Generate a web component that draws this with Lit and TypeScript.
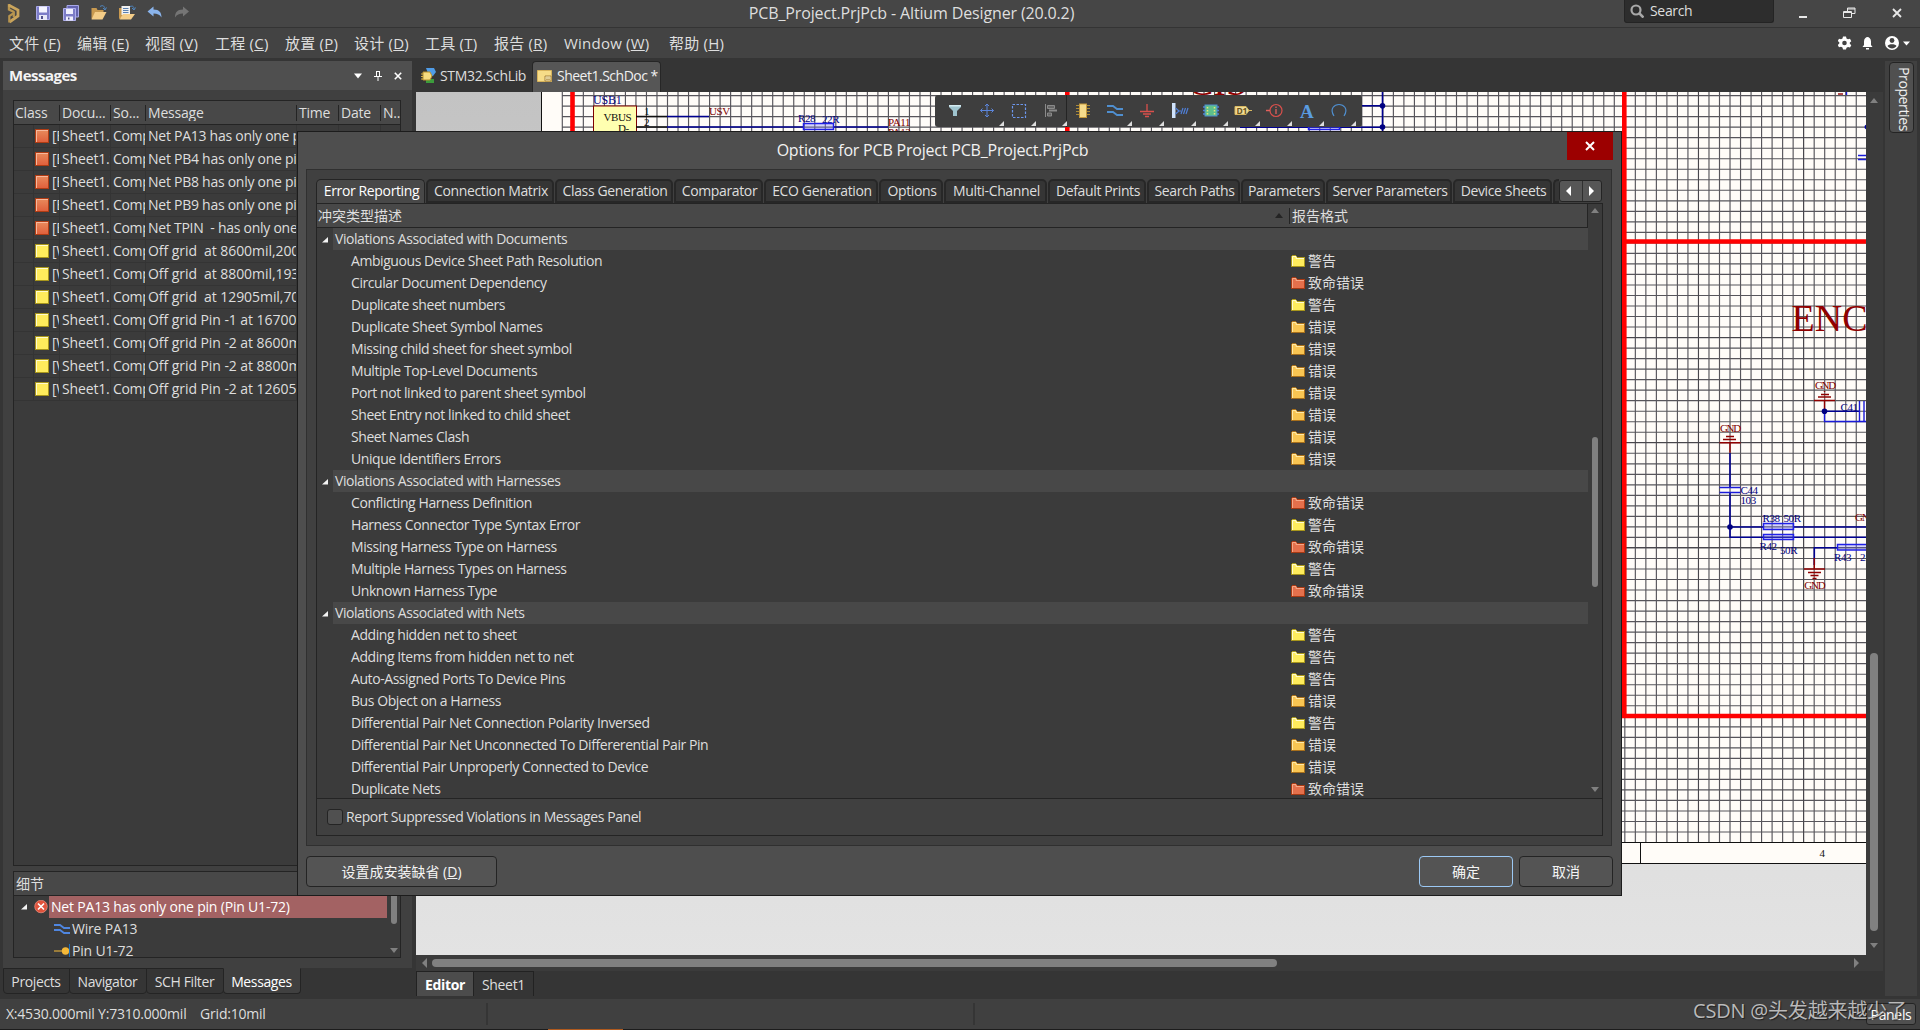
import { LitElement, html, svg, css, nothing } from "lit";
import { customElement } from "lit/decorators.js";

type Level = "warn" | "error" | "fatal";
interface Row { text: string; level?: Level }

const LEVEL_NAME: Record<Level, string> = { warn: "警告", error: "错误", fatal: "致命错误" };
const LEVEL_COLORS: Record<Level, [string, string, string]> = {
  warn: ["#ffec5c", "#fffbd0", "#a8961c"],
  error: ["#f9c552", "#ffe9a8", "#a8701c"],
  fatal: ["#e4704c", "#f5a888", "#a83a14"],
};

const g = (text: string): Row => ({ text });
const r = (text: string, level: Level): Row => ({ text, level });

const ROWS: Row[] = [
  g("Violations Associated with Documents"),
  r("Ambiguous Device Sheet Path Resolution", "warn"),
  r("Circular Document Dependency", "fatal"),
  r("Duplicate sheet numbers", "warn"),
  r("Duplicate Sheet Symbol Names", "error"),
  r("Missing child sheet for sheet symbol", "error"),
  r("Multiple Top-Level Documents", "error"),
  r("Port not linked to parent sheet symbol", "error"),
  r("Sheet Entry not linked to child sheet", "error"),
  r("Sheet Names Clash", "error"),
  r("Unique Identifiers Errors", "error"),
  g("Violations Associated with Harnesses"),
  r("Conflicting Harness Definition", "fatal"),
  r("Harness Connector Type Syntax Error", "warn"),
  r("Missing Harness Type on Harness", "fatal"),
  r("Multiple Harness Types on Harness", "warn"),
  r("Unknown Harness Type", "fatal"),
  g("Violations Associated with Nets"),
  r("Adding hidden net to sheet", "warn"),
  r("Adding Items from hidden net to net", "warn"),
  r("Auto-Assigned Ports To Device Pins", "warn"),
  r("Bus Object on a Harness", "error"),
  r("Differential Pair Net Connection Polarity Inversed", "warn"),
  r("Differential Pair Net Unconnected To Differerential Pair Pin", "error"),
  r("Differential Pair Unproperly Connected to Device", "error"),
  r("Duplicate Nets", "fatal"),
];

const TABS: [string, number][] = [
  ["Error Reporting", 110], ["Connection Matrix", 129], ["Class Generation", 119],
  ["Comparator", 90], ["ECO Generation", 115], ["Options", 65], ["Multi-Channel", 104],
  ["Default Prints", 99], ["Search Paths", 94], ["Parameters", 85],
  ["Server Parameters", 127], ["Device Sheets", 100],
];

const MENU: [string, string, number][] = [
  ["文件", "F", 68], ["编辑", "E", 68], ["视图", "V", 70], ["工程", "C", 70], ["放置", "P", 69],
  ["设计", "D", 71], ["工具", "T", 69], ["报告", "R", 70], ["Window", "W", 105], ["帮助", "H", 60],
];

const MESSAGES: [boolean, string][] = [
  [true, "Net PA13 has only one pin"],
  [true, "Net PB4 has only one pin"],
  [true, "Net PB8 has only one pin"],
  [true, "Net PB9 has only one pin"],
  [true, "Net TPIN  - has only one pin"],
  [false, "Off grid  at 8600mil,2000mil"],
  [false, "Off grid  at 8800mil,1930mil"],
  [false, "Off grid  at 12905mil,7000mil"],
  [false, "Off grid Pin -1 at 16700mil"],
  [false, "Off grid Pin -2 at 8600mil"],
  [false, "Off grid Pin -2 at 8800mil"],
  [false, "Off grid Pin -2 at 12605mil"],
];

const folder = (level: Level) => {
  const [fill, light, dark] = LEVEL_COLORS[level];
  return html`<svg class="folder" width="14" height="13" viewBox="0 0 14 13">
    <path d="M0 12V1h1V0h4v1h1v1h8v10z" fill=${dark} />
    <path d="M1 11V1h4v1h1v1h7v8z" fill=${fill} />
    <path d="M1.5 11V1.500H5V3.500h8" fill="none" stroke=${light} />
  </svg>`;
};

const tri = (dir: "up" | "down" | "left" | "right", color = "#808080") => {
  const d = { up: "M0 6l4-5 4 5z", down: "M0 1h8L4 6z", left: "M6 0v10L1 5z", right: "M1 0v10l5-5z" }[dir];
  return html`<svg class="tri" width="8" height=${dir === "up" || dir === "down" ? 7 : 10}><path d=${d} fill=${color} /></svg>`;
};

const cross = (s: number, w: number, color = "#fff") =>
  html`<svg width=${s} height=${s} viewBox="0 0 10 10"><path d="M1 1l8 8M9 1L1 9" stroke=${color} stroke-width=${w} /></svg>`;

const expander = html`<svg class="expander" width="6" height="6"><path d="M6 0v5.500H0z" fill="#f4f4f4" /></svg>`;

const TOOL_ICONS = [
  svg`<path d="M4 5h12v2l-4 4v5H8v-5L4 7z" fill="#9fc4cf"/><path d="M4 5h12v1.500H4z" fill="#d5ecf2"/>`,
  svg`<path d="M10 4v13M3.500 10.500h13M8 6l2-2 2 2M8 15l2 2 2-2M5.500 8.500l-2 2 2 2M14.500 8.500l2 2-2 2" stroke="#5c86dc" fill="none"/>`,
  svg`<rect x="3.500" y="4.500" width="13" height="13" fill="none" stroke="#6c96ec" stroke-width="1.200" stroke-dasharray="2.500 1.500"/>`,
  svg`<path d="M4.500 4v13" stroke="#8a8a8a"/><path d="M6.500 5.500h7v3h-7zM6.500 13h4v3h-4z" fill="#666" stroke="#8a8a8a"/><path d="M8 9.500h8v2H8z" fill="#8a8a8a"/>`,
  svg`<path d="M3 5.500h14M3 8.500h14M3 11.500h14M3 14.500h14" stroke="#a8893a"/><rect x="6.500" y="4" width="7" height="13.500" fill="#f6dc8c" stroke="#c89b3c"/>`,
  svg`<path d="M2 6h6l4 3h6M2 12h6l4 3h6" stroke="#4f8fd0" stroke-width="1.800" fill="none"/>`,
  svg`<path d="M10 4v7M3 11.500h14M6 14h8M8 16.500h4" stroke="#d9504c" stroke-width="1.300" fill="none"/>`,
  svg`<rect x="3" y="3" width="3.500" height="15" fill="#cfe2fb"/><path d="M6.500 8l3.500 3-3.500 3M10 11h2M12 14l2-6M14.500 14l2-6M17 14l2-6" stroke="#4f7fd8" stroke-width="1.200" fill="none"/>`,
  svg`<path d="M2 7h16M2 10.500h16M2 14h16" stroke="#4f7fd8" stroke-width="1.500"/><rect x="4" y="5" width="12" height="11" fill="#5fc08a" stroke="#4f8fd0"/><path d="M6.500 7v8M13.500 7v8" stroke="#e9e47a" stroke-dasharray="1.500 1.500" stroke-width="1.500"/>`,
  svg`<path d="M2 6.500h11l3 4-3 4H2z" fill="#f0dc98" stroke="#d8b860"/><path d="M15 10.500h4" stroke="#d8b860"/><text x="3.500" y="14" font-size="8.500" font-weight="700" fill="#6a5420">D1</text>`,
  svg`<circle cx="11" cy="10.500" r="6" fill="none" stroke="#d9504c" stroke-width="1.200"/><path d="M1 10.500h4M11 9v5M11 6.500v1.500" stroke="#e0605c" stroke-width="1.300"/>`,
  svg`<text x="3" y="17.500" font-size="19" font-weight="700" style="font-family:'Liberation Serif',serif" fill="#5a9ce0">A</text>`,
  svg`<path d="M5 16C0 8 6 4.500 10 4.500S20 8 15 16" fill="none" stroke="#4f8fd0" stroke-width="1.200"/>`,
];

const STEP = 10.52;

@customElement("schematic-canvas")
class SchematicCanvas extends LitElement {
  static styles = css`
    :host { display: block; width: 1450px; height: 863px; overflow: hidden; letter-spacing: 0; }
    svg { display: block; }
    text { font-family: "Liberation Serif", serif; font-size: 12px; letter-spacing: -0.2px; }
    .n { fill: #000080; }
    .m { fill: #800000; }
    .k { fill: #111; }
    .s { font-size: 11px; letter-spacing: -0.4px; }
    .gn { font-size: 11px; letter-spacing: -1.2px; }
    .mid { text-anchor: middle; }
    .huge { font-size: 38px; fill: #900000; letter-spacing: 0; }
    .wire { stroke: #000090; stroke-width: 1.6; fill: none; }
    .thin { stroke: #1a1ad8; stroke-width: 1.4; fill: none; }
    .gnd { stroke: #900000; stroke-width: 1.4; fill: none; }
    .pin { stroke: #111; stroke-width: 1.4; fill: none; }
    .res { stroke: #2020e8; stroke-width: 1.5; fill: rgba(120, 120, 255, 0.3); }
    .red { stroke: #ff0000; stroke-width: 4.6; fill: none; }
  `;

  private grid() {
    let d = "";
    for (let x = 562.3; x < 1866; x += STEP) d += `M${x.toFixed(2)} 92V842.500`;
    for (let y = 95.6; y < 842; y += STEP) d += `M562 ${y.toFixed(2)}H1866`;
    return d;
  }

  render() {
    return html`<svg width="1450" height="863" viewBox="416 92 1450 863">
      <defs><linearGradient id="bg" x1="0" y1="0" x2="0" y2="1">
        <stop offset="0" stop-color="#c3c3c3" /><stop offset="1" stop-color="#e3e3e3" />
      </linearGradient></defs>
      <rect x="416" y="92" width="1450" height="863" fill="url(#bg)" />
      <rect x="541" y="92" width="1325" height="771" fill="#fffcf8" />
      <path d=${this.grid()} stroke="#57555b" stroke-width="1.150" fill="none" />
      <path d="M1698.500 92V842M1803.500 92V842M1626 337.500H1866M1626 442.500H1866M1626 547.500H1866" stroke="#48464c" />
      <path d="M541.500 92V863.500H1866M562 842.500H1866M1640.500 842V863" stroke="#111" fill="none" />
      <text class="k mid s" x="1822" y="857">4</text>

      <text class="n" x="593" y="104">USB1</text>
      <rect x="593.500" y="106" width="43" height="40" fill="#ffffb0" stroke="#800000" />
      <text class="k s" x="603.500" y="121">VBUS</text>
      <text class="k s" x="618" y="132">D-</text>
      <path class="pin" d="M636 116.500h31M636 127h31" />
      <text class="k s" x="644" y="115">1</text><text class="k s" x="644" y="126">2</text>
      <path class="wire" d="M667 116.500H709M667 127H803M834 127H888" />
      <text class="m s" x="709" y="115">USV</text>
      <text class="n s" x="798" y="122">R28</text><text class="n s" x="822" y="122.500">22R</text>
      <rect class="res" x="803.500" y="123.500" width="30" height="6" />
      <text class="m s" x="888" y="126">PA11</text>
      <text class="m s" x="888" y="136">PA12</text>
      <text class="huge" x="1188" y="95">CIS</text>
      <path class="wire" d="M1382.500 92V131M1362 105.800h20M1240 127.200h142" />
      <circle cx="1382.500" cy="105.800" r="2.800" fill="#000080" /><circle cx="1382.500" cy="127" r="2.800" fill="#000080" />
      <rect class="res" x="1308.500" y="123.500" width="31" height="6" />
      <path class="red" d="M572.500 92V140M1067.300 92V140M1624.300 92V718M1622 241.500H1866M1622 716H1866" />
      <path class="gnd" d="M1838 94h5" /><path class="thin" d="M1846.500 92v3M1858 155.500h8M1858 159.500h8" />
      <circle cx="1867" cy="127" r="2.500" fill="#0000a0" />

      <text class="huge" x="1791.500" y="330.500">ENC</text>
      <text class="m mid gn" x="1825" y="388.500">GND</text>
      <path class="gnd" d="M1824.500 391v1M1821 394.500h8M1818 397h13M1814 400.500h21M1824.500 400.500v10" />
      <path class="thin" d="M1824.500 411V421.500H1866" /><path class="wire" d="M1824.500 411.300H1859" />
      <circle cx="1824.500" cy="411.300" r="2.800" fill="#000080" />
      <text class="n s" x="1840.500" y="410.500">C41</text>
      <path class="thin" d="M1859.500 401v20M1864 401v20" />

      <text class="m mid gn" x="1730" y="431.500">GND</text>
      <path class="gnd" d="M1726 436.500h8M1723 439.500h13M1719.500 442.800h21M1730 442.800v10" />
      <path class="wire" d="M1730 453V487M1730 492V537.300H1866M1730 527h33M1794 527H1866" />
      <path class="thin" d="M1719.500 487.500h21M1719.500 492.500h21" />
      <circle cx="1730" cy="527" r="2.800" fill="#000080" />
      <text class="n s" x="1740.500" y="493.500">C44</text><text class="n s" x="1740.500" y="503.500">103</text>
      <rect class="res" x="1763.500" y="523.500" width="30" height="6" />
      <rect class="res" x="1763.500" y="534.500" width="30" height="5" />
      <text class="n s" x="1762.500" y="521.500">R38</text><text class="n s" x="1783.500" y="521.500">50R</text>
      <text class="n s" x="1759.500" y="549.500">R42</text><text class="n s" x="1780" y="553.500">50R</text>
      <text class="m gn" x="1855" y="520.500">GND</text>
      <path class="wire" d="M1814.300 565V547.800H1837" />
      <rect class="res" x="1837.500" y="544.500" width="40" height="5.500" />
      <text class="n s" x="1834" y="560.500">R43</text><text class="n s" x="1860" y="560.500">2.2K</text>
      <path class="gnd" d="M1814.300 558v11M1804 569h21M1808 572.500h13M1810.500 575.500h8M1812.500 578.500h4" />
      <text class="m mid gn" x="1814.300" y="588.500">GND</text>
    </svg>`;
  }
}

@customElement("options-dialog")
class OptionsDialog extends LitElement {
  static styles = css`
    :host { display: flex; flex-direction: column; box-sizing: border-box; width: 1325px; height: 765px;
      background: #4e4e4e; border: 1px solid #1c1c1c; color: #dedede; letter-spacing: -0.43px; }
    .head { height: 37px; display: flex; flex: none; position: relative; justify-content: center; align-items: center; box-sizing: border-box;
      font-size: 16px; letter-spacing: -0.2px; color: #f2f2f2; padding: 0 54px 2px 0; }
    .close { position: absolute; right: 8px; top: 0; width: 46px; height: 28px; background: #9c0000;
      display: grid; place-items: center; }
    .frame { margin: 0 9px 0 8px; height: 677px; box-sizing: border-box; border: 1px solid #303030; background: #404040; padding: 9px 9px 0; flex: none; }
    .tabs { display: flex; height: 24px; letter-spacing: -0.36px; }
    .tab { flex: none; box-sizing: border-box; height: 24px; margin-right: 1px; background: #353535; border: 2px solid #272727;
      border-radius: 5px 5px 0 0; display: flex; justify-content: center; align-items: center; white-space: nowrap; padding-left: 2px; }
    .tab.on { background: #484848; border: 1px solid #242424; border-bottom: none; color: #fff; padding-bottom: 1px; }
    .rest { flex: 1; max-width: 6px; border: 2px solid #272727; border-right: 0; border-radius: 5px 0 0 0; background: #353535; }
    .arrows { display: flex; width: 43px; height: 22px; margin: 1px 0 0; box-sizing: border-box; border: 1px solid #242424;
      border-radius: 3px; background: #565656; flex: none; }
    .arrows span { flex: 1; display: grid; place-items: center; padding-right: 3px; }
    .arrows span + span { border-left: 1px solid #303030; padding-right: 0; }
    .box { box-sizing: border-box; width: 1287px; height: 633px; border: 1px solid #242424; display: flex; flex-direction: column; }
    .list { display: flex; height: 594px; overflow: hidden; background: #3b3b3b; border-bottom: 1px solid #242424; flex: none; }
    .grid { flex: 1; }
    .cols { display: flex; height: 24px; box-sizing: border-box; background: #484848; border-right: 1px solid #242424;
      border-bottom: 1px solid #242424; align-items: center; letter-spacing: 0; }
    .c1 { width: 972px; display: flex; justify-content: space-between; align-items: center; box-sizing: border-box; padding: 0 6px 0 1px; }
    .c2 { border-left: 1px solid #242424; padding-left: 2px; line-height: 16px; }
    .row { display: flex; height: 22px; align-items: center; white-space: nowrap; }
    .row .name { width: 940px; padding-left: 34px; }
    .lvl { display: flex; align-items: center; gap: 3px; letter-spacing: 0; }
    .grp .exp { width: 16px; display: grid; place-items: center; padding-top: 1px; }
    .grp .gt { flex: 1; height: 22px; background: #484848; padding-left: 2px; display: flex; align-items: center; }
    .bar { width: 14px; display: flex; flex-direction: column; align-items: center; }
    .thumb { width: 6px; height: 150px; border-radius: 3px; background: #808080; margin-top: 223px; }
    .bar .tri:last-child { margin-top: 199px; }
    .bar .tri:first-child { margin-top: 3px; }
    .check { display: flex; align-items: center; height: 36px; padding-left: 10px; gap: 3px; }
    .cb { width: 14px; height: 14px; border: 1px solid #242424; border-radius: 3px; background: #505050; }
    .foot { display: flex; margin: 10px 8px 0; gap: 6px; }
    .btn { box-sizing: border-box; width: 94px; height: 31px; border: 1px solid #242424; border-radius: 4px; background: #545454;
      display: flex; justify-content: center; align-items: center; color: #f4f4f4; letter-spacing: 0; white-space: pre; }
    .btn.wide { width: 191px; margin-right: auto; }
    .btn.ok { border-color: #9cc9f5; }
  `;

  render() {
    return html`
      <div class="head">Options for PCB Project PCB_Project.PrjPcb<div class="close">${cross(10, 2)}</div></div>
      <div class="frame">
        <div class="tabs">
          ${TABS.map(([t, w], i) => html`<div class="tab ${i === 0 ? "on" : ""}" style="width:${w - 1}px">${t}</div>`)}
          <div class="rest"></div>
          <div class="arrows"><span>${tri("left", "#fff")}</span><span>${tri("right", "#fff")}</span></div>
        </div>
        <div class="box">
          <div class="list">
            <div class="grid">
              <div class="cols"><div class="c1"><span>冲突类型描述</span>${tri("up", "#242424")}</div><div class="c2">报告格式</div></div>
              ${ROWS.map((x) => x.level
                ? html`<div class="row"><div class="name">${x.text}</div><div class="lvl">${folder(x.level)}${LEVEL_NAME[x.level]}</div></div>`
                : html`<div class="row grp"><div class="exp">${expander}</div><div class="gt">${x.text}</div></div>`)}
            </div>
            <div class="bar">${tri("up")}<div class="thumb"></div>${tri("down")}</div>
          </div>
          <div class="check"><div class="cb"></div>Report Suppressed Violations in Messages Panel</div>
        </div>
      </div>
      <div class="foot">
        <div class="btn wide">设置成安装缺省 (<u>D</u>)</div><div class="btn ok">确定</div><div class="btn">取消</div>
      </div>`;
  }
}

@customElement("messages-panel")
class MessagesPanel extends LitElement {
  static styles = css`
    :host { display: flex; flex-direction: column; width: 409px; height: 907px; background: #404040; color: #dedede; }
    .head { height: 29px; background: #4f4f4f; display: flex; align-items: center; padding: 0 10px 0 6px; gap: 12px; flex: none; }
    .head b { flex: 1; font-size: 15px; color: #f4f4f4; letter-spacing: -0.5px; padding-bottom: 2px; }
    .table { margin: 10px 11px 0 10px; height: 766px; box-sizing: border-box; border: 1px solid #242424; background: #3b3b3b; flex: none; }
    .cols { display: flex; height: 23px; background: #484848; border-bottom: 1px solid #242424; align-items: center; }
    .cols span { box-sizing: border-box; height: 16px; line-height: 16px; padding-left: 2px; white-space: nowrap; overflow: hidden; flex: none; letter-spacing: -0.2px; }
    .cols span:first-child { padding-left: 1px; }
    .cols span + span { border-left: 1px solid #242424; }
    .row { display: flex; height: 22px; border-bottom: 1px solid #343434; }
    .row div { box-sizing: border-box; border-right: 1px solid #343434; overflow: hidden; white-space: pre; line-height: 22px; padding-left: 2px; flex: none; }
    .a { width: 20px; } .b { width: 26px; display: flex; align-items: center; }
    .b i { width: 12px; height: 12px; flex: none; border: 1px solid #b03c14; background: linear-gradient(#e88a5c, #e0603c); box-shadow: inset 1px 1px #f7b89c; margin-right: 3px; margin-left: -1px;}
    .b i.y { border-color: #a8961c; background: #ffec5c; box-shadow: inset 1px 1px #fffbd0; }
    .d { width: 51px; } .s { width: 35px; } .m { width: 151px; } .t { width: 42px; } .e { width: 42px; }
    .row .d { letter-spacing: -0.15px; }
    .row .m { letter-spacing: -0.26px; }
    .row .m.off { letter-spacing: -0.06px; }
    .details { margin: 5px 11px 0 10px; height: 87px; box-sizing: border-box; border: 1px solid #242424; background: #3b3b3b; flex: none; overflow: hidden; }
    .dh { height: 23px; background: #484848; border-bottom: 1px solid #242424; padding-left: 2px; line-height: 23px; letter-spacing: 0; }
    .body { display: flex; letter-spacing: -0.19px; }
    .tree { width: 373px; }
    .tree > div { height: 22px; display: flex; align-items: center; white-space: nowrap; }
    .exp { padding-left: 7px; width: 12px; height: 6px; display: flex; }
    .sel { flex: 1; align-self: stretch; background: #a36263; color: #fff; padding-left: 2px; line-height: 22px; margin-left: 1px; }
    .kid { padding-left: 40px; gap: 1px; }
    .bar { width: 13px; display: flex; flex-direction: column; align-items: center; }
    .thumb { width: 6px; height: 28px; border-radius: 0 0 3px 3px; background: #808080; margin-bottom: 23px; }
  `;

  render() {
    return html`
      <div class="head"><b>Messages</b>
        <svg width="8" height="8"><path d="M0 1.500h8l-4 5z" fill="#fff" /></svg>
        <svg width="8" height="10"><path d="M2.500 0v5M5.500 0v5M2 .5h4M0 5.500h8M4 6v4" stroke="#fff" fill="none" /></svg>
        ${cross(8, 2)}
      </div>
      <div class="table">
        <div class="cols">
          <span style="width:45px">Class</span><span style="width:51px">Docu...</span><span style="width:35px">So...</span>
          <span style="width:151px">Message</span><span style="width:42px">Time</span><span style="width:42px">Date</span><span style="width:21px">N..</span>
        </div>
        ${MESSAGES.map(([red, m]) => html`<div class="row">
          <div class="a"></div><div class="b"><i class=${red ? "" : "y"}></i>${red ? "[Error]" : "[Warning]"}</div>
          <div class="d">Sheet1.SchDoc</div><div class="s">Compiler</div><div class="m ${red ? "" : "off"}">${m}</div><div class="t"></div><div class="e"></div></div>`)}
      </div>
      <div class="details">
        <div class="dh">细节</div>
        <div class="body">
          <div class="tree">
            <div><span class="exp">${expander}</span>
              <svg width="15" height="14"><circle cx="8" cy="6.500" r="6.300" fill="#e0533c" stroke="#f4a090" stroke-width=".6" /><path d="M5 3.500l6 6M11 3.500l-6 6" stroke="#fff" stroke-width="1.600" /></svg>
              <span class="sel">Net PA13 has only one pin (Pin U1-72)</span></div>
            <div class="kid"><svg width="17" height="12"><path d="M0 2h6l4 3h6M0 7h6l4 3h6" stroke="#4f86e0" stroke-width="1.800" fill="none" /></svg>Wire PA13</div>
            <div class="kid"><svg width="17" height="14"><path d="M0 7h9" stroke="#c49a3c" stroke-width="1.400" /><circle cx="11.500" cy="7" r="3.700" fill="#f4b838" /><path d="M15.500 0v14" stroke="#1f6fb8" /></svg>Pin U1-72</div>
          </div>
          <div class="bar"><div class="thumb"></div>${tri("down")}</div>
        </div>
      </div>`;
  }
}

@customElement("app-root")
class AppRoot extends LitElement {
  static styles = css`
    :host { display: flex; flex-direction: column; width: 1920px; height: 1030px; overflow: hidden; position: relative;
      background: #353535; color: #dedede; font: 14px/16px "Open Sans", "Noto Sans CJK SC", sans-serif; letter-spacing: -0.33px; }
    .title { height: 27px; background: #464646; border-bottom: 1px solid #343434; display: flex; align-items: flex-start; flex: none; position: relative; }
    .title > svg { margin-top: 4px; }
    .caption { position: absolute; left: 0; width: 1823px; top: 3px; text-align: center; font-size: 16px; line-height: 20px; letter-spacing: -0.14px; }
    .search { margin-left: 1426px; box-sizing: border-box; width: 150px; height: 23px; background: #2d2d2d; border: 1px solid #242424; border-top: 0;
      border-radius: 0 0 3px 3px; display: flex; align-items: center; gap: 6px; padding-left: 5px; }
    .win { display: flex; flex: 1; height: 25px; align-items: center; justify-content: space-between; padding: 0 18px 0 25px; }
    .menu { height: 30px; background: #434343; display: flex; align-items: center; padding-left: 9px; flex: none; font-size: 15px; }
    .menu span { flex: none; white-space: pre; letter-spacing: 0.22px; }
    .sys { margin-left: auto; display: flex; align-items: center; padding-right: 10px; }
    .main { display: flex; height: 941px; flex: none; }
    .left { width: 413px; padding: 3px 0 0 3px; box-sizing: border-box; }
    .ptabs { display: flex; }
    .pt { box-sizing: border-box; height: 26px; border: 1px solid #242424; margin-right: -1px; border-radius: 0 0 4px 4px; text-align: center; line-height: 26px; letter-spacing: -0.38px; padding-right: 1px; }
    .pt.on { background: #404040; border-top-color: #404040; color: #fff; }
    .center { width: 1470px; padding-left: 3px; display: flex; flex-direction: column; box-sizing: border-box; }
    .docs { height: 34px; display: flex; align-items: flex-end; flex: none; }
    .doc { display: flex; align-items: center; height: 31px; box-sizing: border-box; gap: 4px; padding: 0 0 2px 5px; width: 116px; white-space: nowrap; }
    .doc.on { width: 129px; background: #565656; border: 1px solid #262626; border-bottom: none; border-radius: 4px 4px 0 0; color: #f0f0f0; padding-left: 4px; gap: 5px; letter-spacing: -0.5px; }
    .view { display: flex; }
    .vbar { width: 17px; height: 863px; background: #3b3b3b; display: flex; flex-direction: column; align-items: center; box-sizing: border-box; padding-top: 5px; padding-right: 1px; }
    .vthumb { width: 8px; height: 278px; background: #808080; border-radius: 4px; margin: 549px 0 11px; flex: none; }
    .hbar { height: 16px; background: #3b3b3b; display: flex; align-items: center; padding: 0 22px 0 5px; }
    .hthumb { width: 845px; height: 8px; border-radius: 4px; background: #808080; margin: 0 auto 0 3px; }
    .etabs { display: flex; }
    .et { box-sizing: border-box; width: 60px; height: 25px; border: 1px solid #222; border-bottom: 0; border-left: 0; text-align: center; line-height: 25px; }
    .et.on { width: 58px; border-left: 1px solid #222; background: #4c4c4c; color: #fff; font-weight: 700; }
    .right { width: 32px; margin: 3px 0 0 2px; background: #404040; height: 935px; padding: 1px 4px; box-sizing: border-box; }
    .prop { width: 25px; height: 71px; box-sizing: border-box; border: 1px solid #242424; border-radius: 4px; background: #505050;
      writing-mode: vertical-rl; padding: 4px 0 0 3px; color: #f0f0f0; line-height: 18px; letter-spacing: -.38px; white-space: nowrap; }
    .status { height: 30px; background: #404040; border-bottom: 1px solid #1c1c1c; display: flex; align-items: center; flex: none; position: relative; }
    .st { box-sizing: border-box; width: 488px; height: 22px; border-right: 2px solid #353535; padding-left: 6px; line-height: 22px; white-space: pre; letter-spacing: -.22px; flex: none; }
    .st + .st { width: 487px; }
    .panels { margin-left: auto; margin-right: 4px; width: 50px; height: 22px; box-sizing: border-box; border: 1px solid #242424; border-radius: 3px;
      background: #505050; color: #fff; text-align: center; line-height: 21px; }
    .orange { position: absolute; left: 548px; top: 30px; width: 75px; height: 1px; background: #b05a1e; }
    .mark { position: absolute; left: 1693px; top: 998px; font-size: 20px; line-height: 26px; color: rgba(205, 205, 205, .88); white-space: nowrap; letter-spacing: -.2px; text-shadow: 1px 1px 1px rgba(0,0,0,.5); }
    .toolbar { position: absolute; left: 935px; top: 95px; width: 427px; height: 32px; background: #3e3e3e; border-radius: 3px;
      display: flex; align-items: center; box-sizing: border-box; padding-left: 4px; }
    .tool { width: 32px; height: 32px; position: relative; display: grid; place-items: center; box-sizing: border-box; padding-bottom: 1px; }
    .tool .corner { position: absolute; right: -1px; bottom: 1px; }
    .tool:nth-child(4) { border-right: 1px solid #242424; }
    options-dialog { position: absolute; left: 297px; top: 131px; }
  `;

  render() {
    return html`
      <div class="title">
        <svg width="198" height="20" viewBox="0 0 198 20">
          <path d="M9 0v5.500l5 2.500" fill="none" stroke="#b8954f" stroke-width="2.400" /><path d="M8.500 1l9.500 5v6l-8.500 6" fill="none" stroke="#c9a45c" stroke-width="2.800" /><path d="M9.300 18.500v-6.500l4.500-3v4" fill="none" stroke="#b8954f" stroke-width="2.200" />
          <path d="M36.500 2.500h13v13h-13z" fill="#7c7cc8" stroke="#a8a8e8" /><path d="M39 2.500h8v6h-8z" fill="#f4f4ff" /><path d="M39 11h8v5h-8z" fill="#e8e8f8" /><path d="M41 12h2v3h-2z" fill="#50508c" />
          <path d="M67 1.500h11.500V13H67z" fill="#6464b0" stroke="#a8a8e8" /><path d="M63.500 4.500h12v12h-12z" fill="#7c7cc8" stroke="#b0b0ec" /><path d="M66 5h7v5h-7zM66 12.500h7v4h-7z" fill="#f0f0ff" /><path d="M68 13.500h1.500v2H68z" fill="#50508c" />
          <path d="M91.500 15V4h5l1 2h6v4" fill="#c99a50" /><path d="M91.500 15.500l3.500-7.500h11.500l-4 7.500z" fill="#f4cd88" /><path d="M100 2.500c3-2 5 0 5 3M103 4l2 2 1.500-2.500" stroke="#4f86c0" fill="none" />
          <path d="M119 15V4h5l1 2h5v3" fill="#c99a50" /><path d="M121.500 2h8.500v9h-8.500z" fill="#f0f0f0" /><path d="M123 4.500h5.500M123 6.500h5.500M123 8.500h5.500" stroke="#5a80b0" /><path d="M119.500 15.500l3.500-5.500h12l-4 5.500z" fill="#f4cd88" /><path d="M130 2.500c3-1 4 0 4 3M132 4l2 2 1.500-2.500" stroke="#4f86c0" fill="none" />
          <path d="M147.500 7.500l6-5v3c6 0 8 3 8 8-2-3-4-4-8-4v3z" fill="#8ab4ec" />
          <path d="M189 7.500l-6-5v3c-6 0-8 3-8 8 2-3 4-4 8-4v3z" fill="#757575" />
        </svg>
        <div class="caption">PCB_Project.PrjPcb - Altium Designer (20.0.2)</div>
        <div class="search"><svg width="14" height="14"><circle cx="6" cy="6" r="4.500" fill="none" stroke="#a8a8a8" stroke-width="2.200" /><path d="M9 9l4.500 4.500" stroke="#a8a8a8" stroke-width="2.600" /></svg>Search</div>
        <div class="win">
          <svg width="8" height="12"><path d="M0 10h8" stroke="#e8e8e8" stroke-width="2" /></svg>
          <svg width="13" height="12"><path d="M4.500 4V1H12v5.500H9M.5 4.500H8.500v6H.5zM4 2h8M.5 5.500h8" fill="none" stroke="#e8e8e8" /></svg>
          ${cross(10, 1.800, "#e8e8e8")}
        </div>
      </div>
      <div class="menu">
        ${MENU.map(([n, k, w]) => html`<span style="width:${w}px">${n} (<u>${k}</u>)</span>`)}
        <div class="sys">
          <svg width="72" height="16">
            <path d="M5 1.500h3l.5 2 1.500.8 2-.6 1.300 2.500-1.500 1.300v1.200l1.500 1.500-1.300 2.300-2-.5-1.500.8L8 14.500H5l-.5-2-1.500-.7-2 .5L-.2 10l1.500-1.500V7.300L-.2 6 1 3.700l2 .6 1.500-.8z" fill="#fff" /><circle cx="6.500" cy="8" r="2.300" fill="#434343" />
            <path d="M24.500 12l1.500-2V6.500c0-3 2-4.500 3.500-4.500S33 3.500 33 6.500V10l1.500 2zM28 13h3v1.500h-3z" fill="#fff" />
            <circle cx="54" cy="8" r="7" fill="#fff" /><circle cx="54" cy="5.500" r="2.400" fill="#434343" /><path d="M49.500 11c1-2.500 8-2.500 9 0-2 3.300-7 3.300-9 0z" fill="#434343" />
            <path d="M65 6.500h7l-3.500 4z" fill="#fff" />
          </svg>
        </div>
      </div>
      <div class="main">
        <div class="left">
          <messages-panel></messages-panel>
          <div class="ptabs"><div class="pt" style="width:67px">Projects</div><div class="pt" style="width:78px">Navigator</div><div class="pt" style="width:78px">SCH Filter</div><div class="pt on" style="width:78px">Messages</div></div>
        </div>
        <div class="center">
          <div class="docs">
            <div class="doc"><svg width="15" height="16"><path d="M5 0h8l2 4-3 4H8z" fill="#4f9ce8" /><path d="M5 11h8v4H5z" fill="#3c9c3c" /><path d="M2 4h7l2 4-2 4H2z" fill="#f6dc80" stroke="#b8902c" /><path d="M0 6h2M0 8.500h2M0 11h2" stroke="#d8b040" /></svg>STM32.SchLib</div>
            <div class="doc on"><svg width="15" height="12"><path d="M.5.5h14v11H.5z" fill="#f6dc88" stroke="#d8b45c" /><path d="M8 6h6v5H8z" fill="#fff4c8" stroke="#a8843c" /><path d="M9 8h4M9 9.500h4" stroke="#a8843c" stroke-width=".7" /></svg>Sheet1.SchDoc *</div>
          </div>
          <div class="view"><schematic-canvas></schematic-canvas>
            <div class="vbar">${tri("up")}<div class="vthumb"></div>${tri("down")}</div></div>
          <div class="hbar">${tri("left")}<div class="hthumb"></div>${tri("right")}</div>
          <div class="etabs"><div class="et on">Editor</div><div class="et">Sheet1</div></div>
        </div>
        <div class="right"><div class="prop">Properties</div></div>
      </div>
      <div class="status"><div class="st">X:4530.000mil Y:7310.000mil    Grid:10mil</div><div class="st"></div>
        <div class="panels">Panels</div><div class="orange"></div></div>
      <div class="toolbar">
        ${TOOL_ICONS.map((icon, i) => html`<div class="tool"><svg width="20" height="21">${icon}</svg>
          ${i === 0 || i === 4 ? nothing : html`<svg class="corner" width="5" height="5"><path d="M5 0v5H0z" fill="#ddd" /></svg>`}</div>`)}
      </div>
      <options-dialog></options-dialog>
      <div class="mark">CSDN @头发越来越少了</div>`;
  }
}
